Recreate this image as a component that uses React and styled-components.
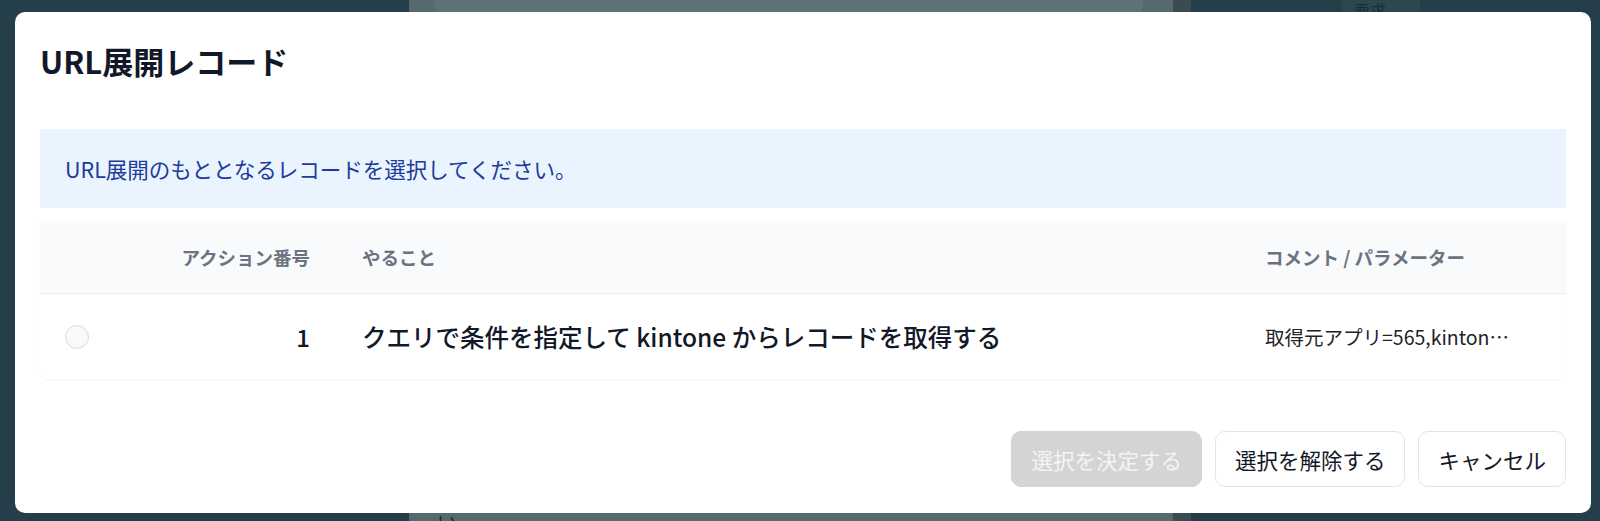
import React from "react";
import styled, { createGlobalStyle } from "styled-components";

const GlobalStyle = createGlobalStyle`
  html, body {
    margin: 0;
    padding: 0;
    background: #243f49;
    font-family: "Noto Sans CJK JP", "Noto Sans", sans-serif;
  }
  * { box-sizing: border-box; }
`;

// dimmed page behind the dialog
const Page = styled.div`
  position: relative;
  width: 1600px;
  height: 521px;
  overflow: hidden;
  display: flex;
  background: #243f49;
`;

const Side = styled.div`
  width: ${(p) => p.$w}px;
  flex-shrink: 0;
  background: #243f49;
`;

const CenterPane = styled.div`
  width: 764px;
  flex-shrink: 0;
  background: #56696f;
  display: flex;
  flex-direction: column;
  justify-content: space-between;
  padding: 0 30px 0 26px;
`;

const GhostInput = styled.div`
  height: 24px;
  margin-top: -8px;
  border-radius: 14px;
  background: #5e7177;
  border: 1px solid #66787e;
`;

const GhostText = styled.div`
  font-size: 20px;
  line-height: 20px;
  color: #1c2a30;
  margin-bottom: -12px;
  padding-left: 2px;
`;

const Divider = styled.div`
  width: 18px;
  flex-shrink: 0;
  background: #3a4b51;
`;

const RightPane = styled.div`
  flex: 1;
  background: #243f49;
  padding-left: 151px;
`;

const GhostChip = styled.div`
  width: 78px;
  height: 22px;
  margin-top: -8px;
  border-radius: 6px;
  background: #2b474f;
  color: #1a2e35;
  font-size: 16px;
  padding: 6px 0 0 12px;
`;

// dialog
const Dialog = styled.div`
  position: absolute;
  left: 15px;
  top: 12px;
  width: 1576px;
  height: 501px;
  background: #fff;
  border-radius: 10px;
  display: flex;
  flex-direction: column;
  padding: 0 25px 26px;
`;

const Title = styled.h2`
  margin: 0;
  padding-top: 27px;
  font-size: 31px;
  line-height: 44px;
  font-weight: 700;
  color: #111827;
`;

const Alert = styled.div`
  margin-top: 46px;
  height: 79px;
  display: flex;
  align-items: center;
  padding: 0 25px;
  background: #e9f4fe;
  color: #1e3a9a;
  font-size: 21.5px;
`;

const Card = styled.div`
  margin-top: 13px;
  border-radius: 0 0 8px 8px;
  background: #fff;
  box-shadow: 0 1px 2px rgba(0, 0, 0, 0.05);
  overflow: hidden;
`;

const Row = styled.div`
  display: grid;
  grid-template-columns: 90px 206px 1fr 327px;
  align-items: center;
  height: ${(p) => (p.$head ? 73 : 85)}px;
  background: ${(p) => (p.$head ? "#f9fafb" : "#fff")};
  border-bottom: ${(p) => (p.$head ? "1px solid #eceef1" : "none")};
`;

const Cell = styled.div`
  padding: 0 26px 0 ${(p) => (p.$first ? 25 : 26)}px;
  text-align: ${(p) => (p.$right ? "right" : "left")};
  white-space: nowrap;
  overflow: hidden;
  text-overflow: ellipsis;
`;

const HeadText = styled.span`
  font-size: 18.5px;
  font-weight: 700;
  color: #6b7280;
`;

const Radio = styled.span`
  display: block;
  width: 24px;
  height: 24px;
  border-radius: 50%;
  border: 1px solid #d7dbe0;
  background: #f8f9fb;
`;

const Num = styled.span`
  font-size: 24px;
  font-weight: 500;
  color: #111827;
`;

const Task = styled.span`
  font-size: 24.5px;
  font-weight: 500;
  color: #111827;
`;

const Comment = styled.div`
  max-width: 248px;
  font-size: 19.5px;
  color: #1f2328;
  white-space: nowrap;
  overflow: hidden;
  text-overflow: ellipsis;
`;

const Footer = styled.div`
  margin-top: auto;
  display: flex;
  justify-content: flex-end;
  gap: 13px;
`;

const Button = styled.button`
  height: 56px;
  padding: 0 19px;
  border-radius: 10px;
  font-family: inherit;
  font-size: 21.5px;
  border: 1px solid ${(p) => (p.disabled ? "#d4d4d4" : "#e1e4e8")};
  background: ${(p) => (p.disabled ? "#d4d4d4" : "#fff")};
  color: ${(p) => (p.disabled ? "#f4f4f5" : "#111827")};
  cursor: ${(p) => (p.disabled ? "default" : "pointer")};
`;

const columns = ["", "アクション番号", "やること", "コメント / パラメーター"];

const App = () => {
  return (
    <>
      <GlobalStyle />
      <Page>
        <Side $w={409} />
        <CenterPane>
          <GhostInput />
          <GhostText>い</GhostText>
        </CenterPane>
        <Divider />
        <RightPane>
          <GhostChip>要求</GhostChip>
        </RightPane>

        <Dialog role="dialog">
          <Title>URL展開レコード</Title>
          <Alert>URL展開のもととなるレコードを選択してください。</Alert>
          <Card>
            <Row $head>
              {columns.map((c, i) => (
                <Cell key={i} $first={i === 0} $right={i === 1}>
                  <HeadText>{c}</HeadText>
                </Cell>
              ))}
            </Row>
            <Row>
              <Cell $first>
                <Radio />
              </Cell>
              <Cell $right>
                <Num>1</Num>
              </Cell>
              <Cell>
                <Task>クエリで条件を指定して kintone からレコードを取得する</Task>
              </Cell>
              <Cell>
                <Comment>取得元アプリ=565,kintoneクエリ=ステータス in ("未処理")</Comment>
              </Cell>
            </Row>
          </Card>
          <Footer>
            <Button disabled>選択を決定する</Button>
            <Button>選択を解除する</Button>
            <Button>キャンセル</Button>
          </Footer>
        </Dialog>
      </Page>
    </>
  );
};

export default App;
